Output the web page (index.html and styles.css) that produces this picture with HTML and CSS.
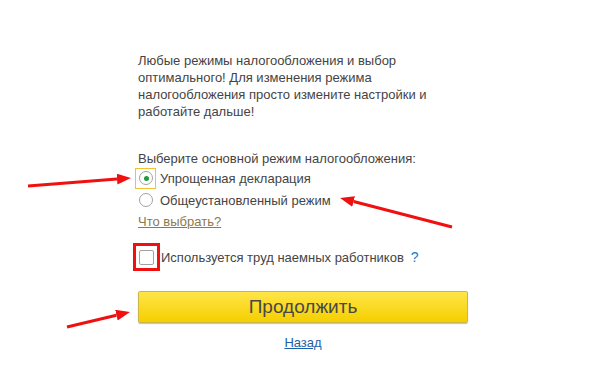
FILE: index.html
```html
<!DOCTYPE html>
<html lang="ru">
<head>
  <meta charset="UTF-8" />
  <meta name="viewport" content="width=device-width, initial-scale=1.0"/>
  <title>Режим налогообложения</title>
  <link rel="stylesheet" href="styles.css">
</head>
<body>
  <div class="page">
    <div class="container">
      <p class="intro">Любые режимы налогообложения и выбор оптимального! Для изменения режима налогообложения просто измените настройки и работайте дальше!</p>

      <div class="group-title">Выберите основной режим налогообложения:</div>
      <label class="radio-row">
        <span class="radio-focus"><span class="radio checked"></span></span>
        <span>Упрощенная декларация</span>
      </label>
      <label class="radio-row">
        <span class="radio-focus plain"><span class="radio"></span></span>
        <span>Общеустановленный режим</span>
      </label>
      <a class="hint" href="#">Что выбрать?</a>

      <label class="check-row">
        <span class="check-mark"><span class="check"></span></span>
        <span>Используется труд наемных работников</span>
        <span class="help">?</span>
      </label>

      <button class="button" type="button">Продолжить</button>
      <div class="back"><a href="#">Назад</a></div>
    </div>

    <svg class="arrows" width="599" height="374" viewBox="0 0 599 374">
      <defs>
        <marker id="head" markerUnits="userSpaceOnUse" markerWidth="14" markerHeight="11" refX="0" refY="5.5" orient="auto">
          <path d="M0,0 L14,5.5 L0,11 z" fill="#f01010"/>
        </marker>
      </defs>
      <line x1="28" y1="186" x2="117" y2="179.1" stroke="#f01010" stroke-width="3" marker-end="url(#head)"/>
      <line x1="452" y1="227" x2="353.6" y2="201.5" stroke="#f01010" stroke-width="3" marker-end="url(#head)"/>
      <line x1="67" y1="327" x2="116.4" y2="315.2" stroke="#f01010" stroke-width="3" marker-end="url(#head)"/>
    </svg>
  </div>
</body>
</html>
```

FILE: styles.css
```css
body {
  margin: 0;
  background-color: #fff;
  font-family: "Liberation Sans", Arial, sans-serif;
  font-size: 13px;
  color: #444;
}

.page {
  position: relative;
  width: 599px;
  height: 374px;
  overflow: hidden;
}

.container {
  width: 330px;
  margin-left: 138px;
  padding-top: 52px;
  line-height: 17px;
}

.intro {
  width: 290px;
  margin: 0 0 30px 0;
}

.group-title {
  height: 17px;
}

.radio-row {
  display: flex;
  align-items: center;
  height: 22px;
  gap: 4px;
}

.radio-focus {
  display: flex;
  align-items: center;
  justify-content: center;
  width: 19px;
  height: 19px;
  margin-left: -3px;
  border: 1px solid #f2c230;
}

.radio-focus.plain {
  border-color: transparent;
}

.radio {
  position: relative;
  width: 12px;
  height: 12px;
  border: 1px solid #a2a2a2;
  border-radius: 50%;
  background-color: #fff;
}

.radio.checked::after {
  content: "";
  position: absolute;
  left: 4px;
  top: 4px;
  width: 5px;
  height: 5px;
  border-radius: 50%;
  background-color: #1f9a3c;
}

.hint {
  display: inline-block;
  margin-top: 2px;
  color: #8c7a4e;
  text-decoration: underline;
}

.check-row {
  display: flex;
  align-items: center;
  margin-top: 13px;
  height: 28px;
}

.check-mark {
  display: flex;
  align-items: center;
  justify-content: center;
  width: 21px;
  height: 22px;
  margin-left: -5px;
  margin-right: 1px;
  border: 3px solid #f01010;
}

.check {
  width: 13px;
  height: 13px;
  border: 1px solid #a2a2a2;
  border-radius: 2px;
  background-color: #fff;
}

.help {
  margin-left: 7px;
  color: #1a7ac6;
  font-size: 14px;
}

.button {
  display: block;
  width: 330px;
  height: 32px;
  margin-top: 20px;
  padding: 0;
  font-family: "Liberation Sans", Arial, sans-serif;
  font-size: 19px;
  color: #484848;
  background: linear-gradient(#ffe548, #f5cf00);
  border: 1px solid #cdb54a;
  border-radius: 2px;
  box-shadow: 0 1px 1px rgba(0, 0, 0, 0.25);
  cursor: pointer;
}

.back {
  margin-top: 11px;
  text-align: center;
}

.back a {
  color: #1d5fa8;
  text-decoration: underline;
}

.arrows {
  position: absolute;
  left: 0;
  top: 0;
  pointer-events: none;
}
```
